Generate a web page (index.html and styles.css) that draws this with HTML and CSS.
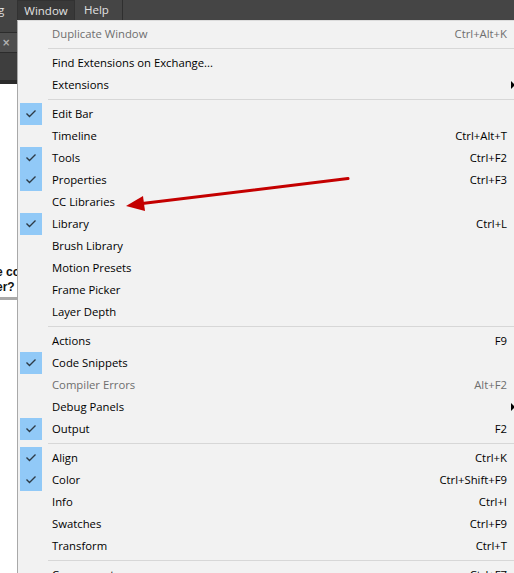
FILE: index.html
```html
<!DOCTYPE html>
<html>
<head>
<meta charset="utf-8">
<link rel="stylesheet" href="styles.css">
</head>
<body>
<div class="page">
  <div class="topbar">
    <span class="tb-item tb-cut">g</span>
    <span class="tb-item tb-active">Window</span>
    <span class="tb-item tb-help">Help</span>
    <span class="tb-sep"></span>
  </div>
  <div class="main">
    <div class="side">
      <div class="side-a"></div>
      <div class="side-tab"><span class="side-x">×</span></div>
      <div class="side-b"></div>
      <div class="side-white">
        <div class="side-text"><span>e co</span><span>er?</span></div>
        <div class="side-rule"></div>
      </div>
    </div>
    <div class="menu">
      <div class="item disabled"><span class="check"></span><span class="label">Duplicate Window</span><span class="key">Ctrl+Alt+K</span><span class="sub"></span></div>
      <div class="sep"></div>
      <div class="item"><span class="check"></span><span class="label">Find Extensions on Exchange...</span><span class="key"></span><span class="sub"></span></div>
      <div class="item"><span class="check"></span><span class="label">Extensions</span><span class="key"></span><span class="sub"><i class="arrow"></i></span></div>
      <div class="sep"></div>
      <div class="item on"><span class="check"><svg viewBox="0 0 22 22"><path d="M6.5 10.5 L9.5 13.5 L15.5 7.5"/></svg></span><span class="label">Edit Bar</span><span class="key"></span><span class="sub"></span></div>
      <div class="item"><span class="check"></span><span class="label">Timeline</span><span class="key">Ctrl+Alt+T</span><span class="sub"></span></div>
      <div class="item on"><span class="check"><svg viewBox="0 0 22 22"><path d="M6.5 10.5 L9.5 13.5 L15.5 7.5"/></svg></span><span class="label">Tools</span><span class="key">Ctrl+F2</span><span class="sub"></span></div>
      <div class="item on"><span class="check"><svg viewBox="0 0 22 22"><path d="M6.5 10.5 L9.5 13.5 L15.5 7.5"/></svg></span><span class="label">Properties</span><span class="key">Ctrl+F3</span><span class="sub"></span></div>
      <div class="item"><span class="check"></span><span class="label">CC Libraries</span><span class="key"></span><span class="sub"></span></div>
      <div class="item on"><span class="check"><svg viewBox="0 0 22 22"><path d="M6.5 10.5 L9.5 13.5 L15.5 7.5"/></svg></span><span class="label">Library</span><span class="key">Ctrl+L</span><span class="sub"></span></div>
      <div class="item"><span class="check"></span><span class="label">Brush Library</span><span class="key"></span><span class="sub"></span></div>
      <div class="item"><span class="check"></span><span class="label">Motion Presets</span><span class="key"></span><span class="sub"></span></div>
      <div class="item"><span class="check"></span><span class="label">Frame Picker</span><span class="key"></span><span class="sub"></span></div>
      <div class="item"><span class="check"></span><span class="label">Layer Depth</span><span class="key"></span><span class="sub"></span></div>
      <div class="sep"></div>
      <div class="item"><span class="check"></span><span class="label">Actions</span><span class="key">F9</span><span class="sub"></span></div>
      <div class="item on"><span class="check"><svg viewBox="0 0 22 22"><path d="M6.5 10.5 L9.5 13.5 L15.5 7.5"/></svg></span><span class="label">Code Snippets</span><span class="key"></span><span class="sub"></span></div>
      <div class="item disabled"><span class="check"></span><span class="label">Compiler Errors</span><span class="key">Alt+F2</span><span class="sub"></span></div>
      <div class="item"><span class="check"></span><span class="label">Debug Panels</span><span class="key"></span><span class="sub"><i class="arrow"></i></span></div>
      <div class="item on"><span class="check"><svg viewBox="0 0 22 22"><path d="M6.5 10.5 L9.5 13.5 L15.5 7.5"/></svg></span><span class="label">Output</span><span class="key">F2</span><span class="sub"></span></div>
      <div class="sep"></div>
      <div class="item on"><span class="check"><svg viewBox="0 0 22 22"><path d="M6.5 10.5 L9.5 13.5 L15.5 7.5"/></svg></span><span class="label">Align</span><span class="key">Ctrl+K</span><span class="sub"></span></div>
      <div class="item on"><span class="check"><svg viewBox="0 0 22 22"><path d="M6.5 10.5 L9.5 13.5 L15.5 7.5"/></svg></span><span class="label">Color</span><span class="key">Ctrl+Shift+F9</span><span class="sub"></span></div>
      <div class="item"><span class="check"></span><span class="label">Info</span><span class="key">Ctrl+I</span><span class="sub"></span></div>
      <div class="item"><span class="check"></span><span class="label">Swatches</span><span class="key">Ctrl+F9</span><span class="sub"></span></div>
      <div class="item"><span class="check"></span><span class="label">Transform</span><span class="key">Ctrl+T</span><span class="sub"></span></div>
      <div class="sep"></div>
      <div class="item"><span class="check"></span><span class="label">Components</span><span class="key">Ctrl+F7</span><span class="sub"></span></div>
    </div>
  </div>
  <svg class="callout" width="514" height="573" viewBox="0 0 514 573">
    <line x1="348" y1="178.5" x2="138" y2="204" stroke="#c40000" stroke-width="3" stroke-linecap="round"/>
    <polygon points="126,206 143,196 145,211" fill="#c40000"/>
  </svg>
</div>
</body>
</html>
```

FILE: styles.css
```css
html, body {
  margin: 0;
  padding: 0;
  background: #ffffff;
}
.page {
  position: relative;
  width: 514px;
  height: 573px;
  overflow: hidden;
  font-family: "Open Sans", "Noto Sans", sans-serif;
  font-size: 11.3px;
}
.topbar {
  height: 20px;
  background: #454545;
  display: flex;
  align-items: stretch;
  color: #e2e2e2;
  font-size: 11.5px;
}
.tb-item {
  display: flex;
  align-items: center;
  line-height: 1;
}
.tb-cut {
  margin-left: -2px;
  width: 19px;
}
.tb-active {
  width: 58px;
  justify-content: center;
  background: #393939;
  border: 1px solid #323232;
  border-bottom: none;
  box-sizing: border-box;
}
.tb-help {
  margin-left: 9px;
  width: 38px;
}
.tb-sep {
  width: 1px;
  background: #2f2f2f;
}
.main {
  display: flex;
  height: 553px;
}
.side {
  width: 17px;
  flex: none;
  display: flex;
  flex-direction: column;
  overflow: hidden;
}
.side-a {
  height: 12px;
  background: #434343;
  border-bottom: 1px solid #2c2c2c;
}
.side-tab {
  height: 19px;
  background: #4e4e4e;
  border-bottom: 1px solid #2c2c2c;
  display: flex;
  align-items: center;
}
.side-x {
  color: #b4b4b4;
  font-family: "DejaVu Sans", sans-serif;
  font-size: 10px;
  font-weight: bold;
  margin-left: 2px;
}
.side-b {
  height: 27px;
  background: #3e3e3e;
  border-bottom: 4px solid #2b2b2b;
}
.side-white {
  flex: 1;
  background: #ffffff;
  padding-top: 181px;
}
.side-text {
  display: flex;
  flex-direction: column;
  font-family: "Liberation Sans", sans-serif;
  font-weight: bold;
  font-size: 12px;
  line-height: 15px;
  color: #111;
  margin-left: -4px;
  white-space: nowrap;
}
.side-rule {
  height: 3px;
  margin-top: 2px;
  background: #a9a9a9;
}
.menu {
  flex: none;
  width: 512px;
  background: #f2f2f2;
  border-left: 1px solid #a9a9a9;
  border-top: 1px solid #dcdcdc;
  padding-top: 2px;
  box-sizing: border-box;
}
.item {
  height: 22px;
  display: grid;
  grid-template-columns: 22px 1fr auto 22px;
  align-items: center;
  padding-left: 2px;
  color: #000;
  white-space: nowrap;
}
.check {
  height: 22px;
  display: block;
}
.item.on .check {
  background: #91c9f7;
}
.check svg {
  width: 22px;
  height: 22px;
  display: block;
}
.check path {
  fill: none;
  stroke: #2d3b46;
  stroke-width: 1.4;
}
.label {
  padding-left: 10px;
  margin-bottom: 2px;
}
.key {
  text-align: right;
  margin-bottom: 2px;
}
.item.disabled {
  color: #6e6e6e;
}
.sub {
  position: relative;
  height: 22px;
}
.arrow {
  position: absolute;
  left: 4px;
  top: 7px;
  width: 0;
  height: 0;
  border-top: 4px solid transparent;
  border-bottom: 4px solid transparent;
  border-left: 4px solid #000;
}
.sep {
  height: 7px;
  position: relative;
}
.sep::after {
  content: "";
  position: absolute;
  left: 30px;
  right: 0;
  top: 3px;
  height: 1px;
  background: #d7d7d7;
}
.callout {
  position: absolute;
  left: 0;
  top: 0;
  pointer-events: none;
}
```
